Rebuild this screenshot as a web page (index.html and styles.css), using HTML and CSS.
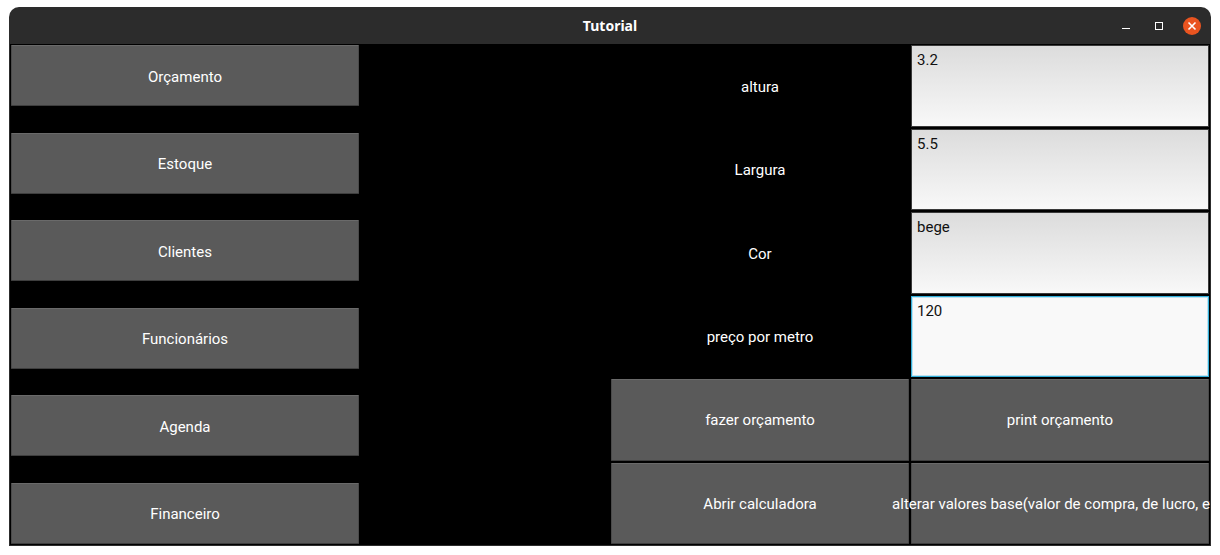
FILE: index.html
```html
<!DOCTYPE html>
<html lang="pt">
<head>
  <meta charset="UTF-8" />
  <title>Tutorial</title>
  <link rel="stylesheet" href="styles.css">
</head>
<body>
  <div class="window">
    <div class="titlebar">
      <span></span>
      <span class="title">Tutorial</span>
      <div class="controls">
        <svg class="ctl" width="18" height="18" viewBox="0 0 18 18"><rect x="5" y="11" width="8" height="1" fill="#fff"/></svg>
        <svg class="ctl" width="18" height="18" viewBox="0 0 18 18"><rect x="5.5" y="5.5" width="7" height="7" fill="none" stroke="#fff" stroke-width="1"/></svg>
        <svg class="ctl close" width="18" height="18" viewBox="0 0 18 18">
          <circle cx="9" cy="9" r="9" fill="#e95420"/>
          <path d="M5.5 5.5 L12.5 12.5 M12.5 5.5 L5.5 12.5" stroke="#fff" stroke-width="1.6"/>
        </svg>
      </div>
    </div>

    <div class="content">
      <!-- menu lateral -->
      <div class="menu">
        <button class="btn">Orçamento</button>
        <button class="btn">Estoque</button>
        <button class="btn">Clientes</button>
        <button class="btn">Funcionários</button>
        <button class="btn">Agenda</button>
        <button class="btn">Financeiro</button>
      </div>

      <div class="spacer"></div>

      <!-- formulario de orcamento -->
      <div class="form">
        <div class="label">altura</div>
        <div class="input">3.2</div>
        <div class="label">Largura</div>
        <div class="input">5.5</div>
        <div class="label">Cor</div>
        <div class="input">bege</div>
        <div class="label">preço por metro</div>
        <div class="input focus">120</div>
        <button class="btn">fazer orçamento</button>
        <button class="btn">print orçamento</button>
        <button class="btn">Abrir calculadora</button>
        <button class="btn wide"><span>alterar valores base(valor de compra, de lucro, etc)</span></button>
      </div>
    </div>
  </div>
</body>
</html>
```

FILE: styles.css
```css
* {
  box-sizing: border-box;
}
body {
  margin: 0;
  background: #fff;
  font-family: Roboto, 'Noto Sans', Arial, sans-serif;
}
.window {
  margin: 7px 0 0 9px;
  width: 1202px;
  background: #2c2c2c;
  border-radius: 10px 10px 0 0;
  overflow: hidden;
}
.titlebar {
  height: 37px;
  display: grid;
  grid-template-columns: 1fr auto 1fr;
  align-items: center;
}
.title {
  color: #fff;
  font-family: 'Noto Sans', 'DejaVu Sans', sans-serif;
  font-weight: 700;
  font-size: 14px;
}
.controls {
  display: flex;
  justify-content: flex-end;
  gap: 15px;
  padding-right: 10px;
  padding-top: 1px;
}
.content {
  margin: 0 1px 1px 1px;
  height: 501px;
  background: #000;
  display: flex;
  overflow: hidden;
}
.menu {
  width: 350px;
  flex: none;
  padding: 1px 1px 1px 1px;
  display: flex;
  flex-direction: column;
  justify-content: space-between;
}
.spacer {
  width: 250px;
  flex: none;
}
.btn {
  margin: 0;
  padding: 2px 0 0 0;
  height: 61px;
  background: #5a5a5a;
  color: #fff;
  font-family: Roboto, sans-serif;
  font-size: 15px;
  border: 1px solid #4a4a4a;
  border-top-color: #6a6a6a;
  border-bottom-color: #3e3e3e;
  border-radius: 1px;
}
.form {
  width: 600px;
  flex: none;
  padding: 1px;
  display: grid;
  grid-template-columns: 298px 298px;
  grid-template-rows: repeat(6, 1fr);
  gap: 2px;
}
.form .btn {
  height: auto;
  padding-top: 1px;
}
.label {
  color: #fff;
  font-size: 15px;
  padding-top: 2px;
  display: flex;
  align-items: center;
  justify-content: center;
}
.input {
  background: linear-gradient(#dcdcdc, #f8f8f8);
  border: 1px solid #3a3a3a;
  padding: 5px 5px;
  font-size: 15px;
  line-height: 18px;
  color: #111;
}
.input.focus {
  background: #f9f9f9;
  border-color: #33afd9;
  box-shadow: inset 0 0 0 1px #bfe3f1;
}
.wide {
  display: flex;
  align-items: center;
  justify-content: center;
  overflow: visible;
  white-space: nowrap;
}
```
